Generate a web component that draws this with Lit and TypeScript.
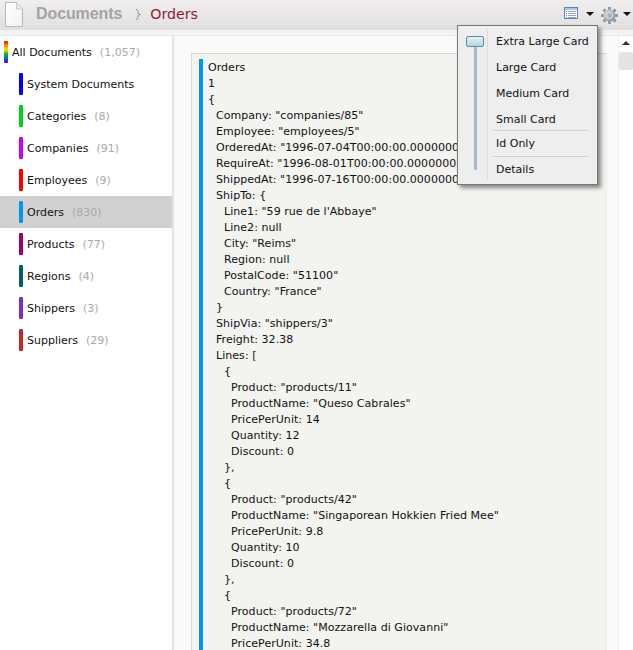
import { LitElement, html, css, svg } from "lit";
import { customElement } from "lit/decorators.js";

const NAV = [
  { name: "System Documents", count: "", color: "#0000ff" },
  { name: "Categories", count: "(8)", color: "#00d41a" },
  { name: "Companies", count: "(91)", color: "#c800ff" },
  { name: "Employees", count: "(9)", color: "#ff0000" },
  { name: "Orders", count: "(830)", color: "#0096f0", selected: true },
  { name: "Products", count: "(77)", color: "#a5006a" },
  { name: "Regions", count: "(4)", color: "#00635f" },
  { name: "Shippers", count: "(3)", color: "#7b2fc8" },
  { name: "Suppliers", count: "(29)", color: "#c82828" },
];

const DOC = `Orders
1
{
  Company: "companies/85"
  Employee: "employees/5"
  OrderedAt: "1996-07-04T00:00:00.0000000"
  RequireAt: "1996-08-01T00:00:00.0000000"
  ShippedAt: "1996-07-16T00:00:00.0000000"
  ShipTo: {
    Line1: "59 rue de l'Abbaye"
    Line2: null
    City: "Reims"
    Region: null
    PostalCode: "51100"
    Country: "France"
  }
  ShipVia: "shippers/3"
  Freight: 32.38
  Lines: [
    {
      Product: "products/11"
      ProductName: "Queso Cabrales"
      PricePerUnit: 14
      Quantity: 12
      Discount: 0
    },
    {
      Product: "products/42"
      ProductName: "Singaporean Hokkien Fried Mee"
      PricePerUnit: 9.8
      Quantity: 10
      Discount: 0
    },
    {
      Product: "products/72"
      ProductName: "Mozzarella di Giovanni"
      PricePerUnit: 34.8`.split("\n");

@customElement("app-root")
export class AppRoot extends LitElement {
  static styles = css`
    :host {
      display: block;
      width: 633px;
      height: 650px;
      overflow: hidden;
      position: relative;
      font-family: "DejaVu Sans", Verdana, sans-serif;
      font-size: 11px;
      color: #111;
      background: #fff;
    }
    .header {
      height: 30px;
      box-sizing: border-box;
      display: flex;
      align-items: center;
      padding: 0 2px 2px 5px;
      background: linear-gradient(#f0eeee, #e2dfe0);
    }
    .band {
      height: 6px;
      box-sizing: border-box;
      background: #f4f3f3;
      border-bottom: 1px solid #ece8e9;
    }
    .doc-icon { margin-right: 13px; flex: none; }
    .crumb-root {
      font: bold 16px "Liberation Sans", Arial, sans-serif;
      letter-spacing: -0.1px;
      color: #a3a3a3;
    }
    .crumb-sep {
      margin: 0 9px 0 13px;
      flex: none;
    }
    .crumb-cur {
      font: 14.2px "DejaVu Sans", sans-serif;
      color: #8e1b36;
    }
    .spacer { flex: 1; }
    .tools { display: flex; align-items: center; }
    .arrow {
      width: 0;
      height: 0;
      border-left: 4px solid transparent;
      border-right: 4px solid transparent;
      border-top: 4px solid #111;
    }
    .arrow.first { margin: 0 7px 0 8px; }
    .arrow.last { margin-left: 5px; }
    .list { margin-bottom: 2px; }
    .gear { margin-top: 2px; }
    .body { display: flex; height: 614px; }
    .side {
      width: 172px;
      flex: none;
      box-sizing: border-box;
      background: #fff;
    }
    .item {
      height: 32px;
      display: flex;
      align-items: center;
      padding-left: 19px;
    }
    .item.all { padding-left: 4px; }
    .item.sel { background: #d1d1d1; }
    .bar { width: 4px; height: 22px; flex: none; margin-right: 4px; border-radius: 1px; }
    .all .bar {
      background: linear-gradient(#ff0000, #ff9000, #e8e800, #00c000, #0060ff, #6000a0);
    }
    .count { color: #aaa; margin-left: 8px; }
    .main {
      flex: 1;
      min-width: 0;
      display: flex;
      border-left: 2px solid #e6e1e2;
      background: #fafafa;
    }
    .content {
      flex: 1;
      min-width: 0;
      padding: 17px 11px 0 17px;
      overflow: hidden;
    }
    .card {
      height: 700px;
      box-sizing: border-box;
      border: 1px solid #d8d8d8;
      border-bottom: none;
      border-right-color: #eee;
      background: #f3f3f0;
      padding: 5px 4px 0 7px;
    }
    .doc {
      border-left: 4px solid #0096f0;
      padding: 1px 0 0 5px;
      height: 100%;
    }
    .line { height: 16px; line-height: 16px; white-space: pre; letter-spacing: 0.05px; }
    .scroll {
      width: 15px;
      flex: none;
      background: #fff;
      border-left: 1px solid #eee;
      box-sizing: border-box;
      position: relative;
    }
    .scroll .up {
      position: absolute;
      top: 5px;
      left: 3px;
      width: 0;
      height: 0;
      border-left: 4px solid transparent;
      border-right: 4px solid transparent;
      border-bottom: 4px solid #333;
    }
    .scroll .thumb {
      position: absolute;
      top: 16px;
      left: 0;
      width: 14px;
      height: 18px;
      border-radius: 2px;
      background: #e4e4e4;
    }
    .menu {
      position: absolute;
      left: 457px;
      top: 25px;
      width: 141px;
      height: 160px;
      box-sizing: border-box;
      background: #eeeeee;
      border: 1px solid #777;
      box-shadow: 3px 3px 4px rgba(0,0,0,0.45);
      display: flex;
      padding: 3px 0 2px;
    }
    .slider {
      width: 30px;
      flex: none;
      box-sizing: border-box;
      margin: 1px 0 2px;
      border-right: 1px solid #dcdcdc;
      position: relative;
    }
    .track {
      position: absolute;
      left: 16px;
      top: 10px;
      bottom: 10px;
      width: 3px;
      background: #a9b9cc;
      border-radius: 2px;
    }
    .knob {
      position: absolute;
      left: 8px;
      top: 6px;
      width: 16px;
      height: 9px;
      border: 1px solid #5b8da5;
      border-radius: 2px;
      background: linear-gradient(#e6f0f4, #b8d4df);
    }
    .opts { flex: 1; padding: 0 9px 0 5px; }
    .opt { height: 26px; line-height: 26px; padding-left: 3px; color: #111; white-space: nowrap; }
    .opt.short { height: 23px; }
    .sep { border-top: 1px solid #d4d4d4; height: 25px; line-height: 25px; }
  `;

  private docIcon() {
    return html`<svg class="doc-icon" width="18" height="25" viewBox="0 0 18 25">
      <defs><linearGradient id="p" x1="0" y1="0" x2="1" y2="1"><stop offset="0" stop-color="#fff"/><stop offset="1" stop-color="#eef1f6"/></linearGradient></defs>
      <path d="M.5.5H11.5L17.5 7V24.5H.5Z" fill="url(#p)" stroke="#b4b8bf"/>
      <path d="M11.5.5V7H17.5" fill="#e8eaee" stroke="#c6c9ce"/>
    </svg>`;
  }

  private listIcon() {
    const rows = [4, 6, 8, 10].map(
      (y) => svg`<path d="M4 ${y + 0.5}H12" stroke="#8fa6c4"/><rect x="2" y="${y}" width="1" height="1" fill="#6f8fb8"/>`
    );
    return html`<svg class="list" width="14" height="12" viewBox="0 0 14 12">
      <rect x=".5" y=".5" width="13" height="11" fill="#fff" stroke="#5a86bd"/>
      <rect x="1" y="1" width="12" height="2" fill="#a8c4e6"/>
      ${rows}
    </svg>`;
  }

  private gearIcon() {
    const teeth = [0, 45, 90, 135, 180, 225, 270, 315].map(
      (a) => svg`<rect x="7" y="0" width="3" height="17" rx="1" fill="#8f9aa8" transform="rotate(${a} 8.5 8.5)"/>`
    );
    return html`<svg class="gear" width="17" height="17" viewBox="0 0 17 17">
      <defs><linearGradient id="g" x1="0" y1="0" x2="1" y2="1"><stop offset="0" stop-color="#d6dbe0"/><stop offset="1" stop-color="#858f9b"/></linearGradient></defs>
      ${teeth}
      <circle cx="8.5" cy="8.5" r="6" fill="url(#g)"/>
      <circle cx="8.5" cy="8.5" r="3" fill="#aab2bb" stroke="#e6e9ec"/>
    </svg>`;
  }

  render() {
    return html`
      <div class="header">
        ${this.docIcon()}
        <span class="crumb-root">Documents</span>
        <svg class="crumb-sep" width="6" height="11" viewBox="0 0 6 11"><path d="M1 .5C3 .5 3 2 3 3.5C3 4.5 3.5 5.5 5.5 5.5C3.5 5.5 3 6.5 3 7.5C3 9 3 10.5 1 10.5" fill="none" stroke="#888"/></svg>
        <span class="crumb-cur">Orders</span>
        <div class="spacer"></div>
        <div class="tools">
          ${this.listIcon()}
          <span class="arrow first"></span>
          ${this.gearIcon()}
          <span class="arrow last"></span>
        </div>
      </div>
      <div class="band"></div>
      <div class="body">
        <div class="side">
          <div class="item all"><span class="bar"></span><span>All Documents</span><span class="count">(1,057)</span></div>
          ${NAV.map(
            (n) => html`<div class="item ${n.selected ? "sel" : ""}">
              <span class="bar" style="background:${n.color}"></span>
              <span>${n.name}</span>
              ${n.count ? html`<span class="count">${n.count}</span>` : ""}
            </div>`
          )}
        </div>
        <div class="main">
          <div class="content">
            <div class="card">
              <div class="doc">${DOC.map((l) => {
                const text = l.trimStart();
                const indent = Math.round((l.length - text.length) * 3.9);
                return html`<div class="line" style="padding-left:${indent}px">${text}</div>`;
              })}</div>
            </div>
          </div>
          <div class="scroll"><span class="up"></span><span class="thumb"></span></div>
        </div>
      </div>
      <div class="menu">
        <div class="slider"><span class="track"></span><span class="knob"></span></div>
        <div class="opts">
          <div class="opt">Extra Large Card</div>
          <div class="opt">Large Card</div>
          <div class="opt">Medium Card</div>
          <div class="opt short">Small Card</div>
          <div class="opt sep">Id Only</div>
          <div class="opt sep">Details</div>
        </div>
      </div>
    `;
  }
}
